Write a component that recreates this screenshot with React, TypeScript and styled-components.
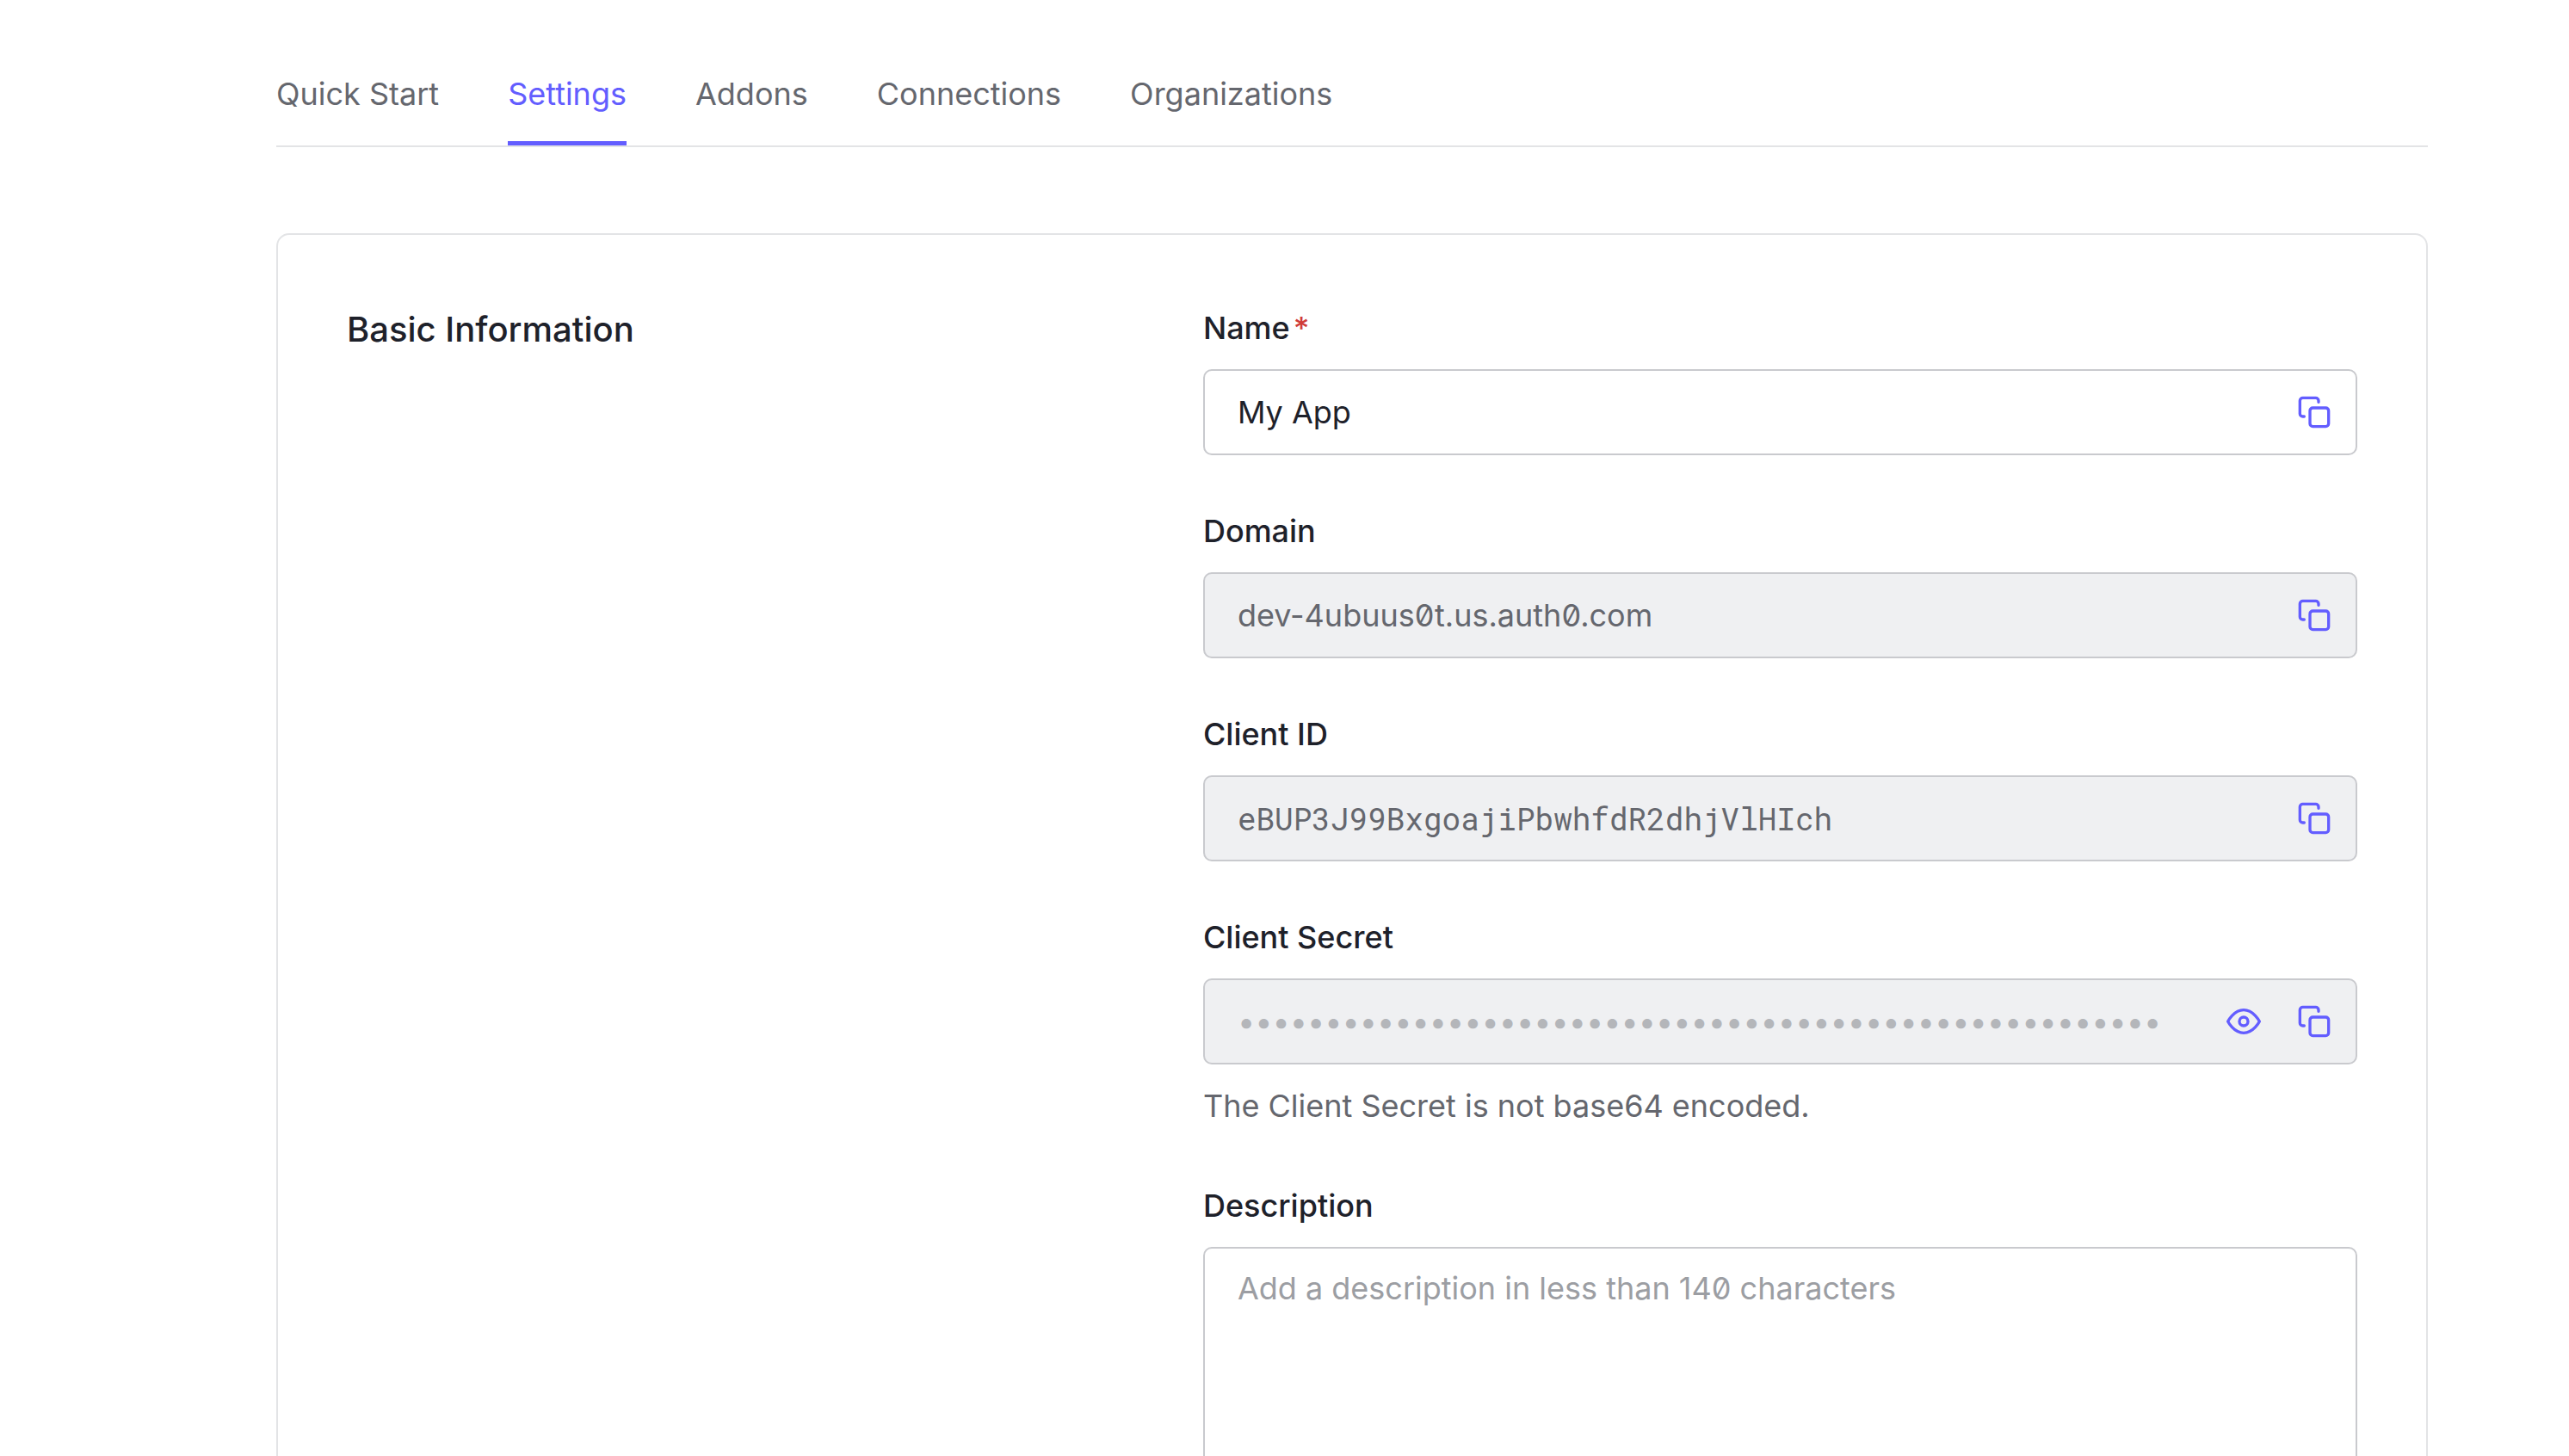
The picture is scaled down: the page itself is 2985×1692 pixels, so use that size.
import React from "react";
import styled, { createGlobalStyle } from "styled-components";
import { FiCopy, FiEye } from "react-icons/fi";

const color = {
  text: "#1e212a",
  muted: "#65676e",
  placeholder: "#9c9ea3",
  mask: "#b4b6ba",
  accent: "#635dff",
  danger: "#d03c38",
  line: "#e3e4e6",
  fieldBorder: "#c9cace",
  readOnly: "#eff0f2",
  page: "#ffffff",
};

const GlobalStyle = createGlobalStyle`
  *, *::before, *::after {
    box-sizing: border-box;
  }
  body {
    margin: 0;
    background: ${color.page};
    color: ${color.text};
    font-family: Inter, "Noto Sans", sans-serif;
    font-size: 36px;
    line-height: 56px;
    font-optical-sizing: none;
    font-feature-settings: "zero";
  }
`;

const Page = styled.main`
  height: 100vh;
  overflow-y: auto;
  scrollbar-width: none;
  padding: 81px 164px 80px 321px;
`;

const Tabs = styled.nav`
  display: flex;
  gap: 80px;
  border-bottom: 2px solid ${color.line};
`;

const Tab = styled.a<{ $active?: boolean }>`
  padding-bottom: 27px;
  border-bottom: 5px solid ${(p) => (p.$active ? color.accent : "transparent")};
  color: ${(p) => (p.$active ? color.accent : color.muted)};
  text-decoration: none;
  white-space: nowrap;
`;

const Card = styled.section`
  display: grid;
  grid-template-columns: 5fr 7fr;
  column-gap: 37px;
  margin-top: 100px;
  padding: 80px;
  border: 2px solid ${color.line};
  border-radius: 15px;
`;

const CardTitle = styled.h2`
  margin: 0;
  font-size: 40px;
  line-height: 60px;
  font-weight: 500;
`;

const Form = styled.form`
  display: flex;
  flex-direction: column;
  gap: 60px;
  min-width: 0;
`;

const FieldGroup = styled.div`
  display: flex;
  flex-direction: column;
  gap: 20px;
`;

const Label = styled.label`
  font-weight: 500;
`;

const Required = styled.span`
  margin-left: 4px;
  color: ${color.danger};
`;

const Control = styled.div<{ $readOnly?: boolean }>`
  display: flex;
  align-items: center;
  gap: 42px;
  height: 100px;
  padding: 0 28px 0 38px;
  border: 2px solid ${color.fieldBorder};
  border-radius: 10px;
  background: ${(p) => (p.$readOnly ? color.readOnly : color.page)};
`;

const TextInput = styled.input<{ $mono?: boolean }>`
  flex: 1;
  min-width: 0;
  height: 56px;
  padding: 0;
  border: 0;
  outline: 0;
  background: transparent;
  color: ${color.text};
  font: inherit;
  font-family: ${(p) =>
    p.$mono ? '"Roboto Mono", "DejaVu Sans Mono", monospace' : "inherit"};
  font-feature-settings: inherit;
  font-optical-sizing: inherit;

  &:read-only {
    color: ${color.muted};
  }

  &[type="password"] {
    color: ${color.mask};
  }
`;

const IconButton = styled.button`
  display: flex;
  flex: none;
  padding: 0;
  border: 0;
  background: transparent;
  color: ${color.accent};
  font-size: 40px;
  cursor: pointer;
`;

const Hint = styled.p`
  margin: 0;
  color: ${color.muted};
`;

const DescriptionInput = styled.textarea`
  display: block;
  width: 100%;
  height: 300px;
  padding: 18px 38px;
  border: 2px solid ${color.fieldBorder};
  border-radius: 10px;
  outline: 0;
  resize: vertical;
  background: ${color.page};
  color: ${color.text};
  font: inherit;
  font-feature-settings: inherit;
  font-optical-sizing: inherit;

  &::placeholder {
    color: ${color.placeholder};
    opacity: 1;
  }
`;

const tabs = ["Quick Start", "Settings", "Addons", "Connections", "Organizations"];

type FieldProps = {
  id: string;
  label: string;
  value: string;
  required?: boolean;
  readOnly?: boolean;
  mono?: boolean;
  secret?: boolean;
  hint?: string;
};

function Field({ id, label, value, required, readOnly, mono, secret, hint }: FieldProps) {
  return (
    <FieldGroup>
      <Label htmlFor={id}>
        {label}
        {required && <Required>*</Required>}
      </Label>
      <Control $readOnly={readOnly}>
        <TextInput
          id={id}
          type={secret ? "password" : "text"}
          defaultValue={value}
          required={required}
          readOnly={readOnly}
          autoComplete="off"
          spellCheck={false}
          $mono={mono}
        />
        {secret && (
          <IconButton type="button" aria-label={`Reveal ${label}`}>
            <FiEye />
          </IconButton>
        )}
        <IconButton type="button" aria-label={`Copy ${label}`}>
          <FiCopy />
        </IconButton>
      </Control>
      {hint && <Hint>{hint}</Hint>}
    </FieldGroup>
  );
}

export default function App() {
  return (
    <>
      <GlobalStyle />
      <Page>
        <Tabs>
          {tabs.map((name) => (
            <Tab
              key={name}
              href="#"
              $active={name === "Settings"}
              aria-current={name === "Settings" ? "page" : undefined}
            >
              {name}
            </Tab>
          ))}
        </Tabs>
        <Card>
          <CardTitle>Basic Information</CardTitle>
          <Form>
            <Field id="name" label="Name" value="My App" required />
            <Field id="domain" label="Domain" value="dev-4ubuus0t.us.auth0.com" readOnly />
            <Field
              id="client-id"
              label="Client ID"
              value="eBUP3J99BxgoajiPbwhfdR2dhjVlHIch"
              readOnly
              mono
            />
            <Field
              id="client-secret"
              label="Client Secret"
              value={"•".repeat(53)}
              readOnly
              secret
              hint="The Client Secret is not base64 encoded."
            />
            <FieldGroup>
              <Label htmlFor="description">Description</Label>
              <DescriptionInput
                id="description"
                placeholder="Add a description in less than 140 characters"
              />
            </FieldGroup>
          </Form>
        </Card>
      </Page>
    </>
  );
}
